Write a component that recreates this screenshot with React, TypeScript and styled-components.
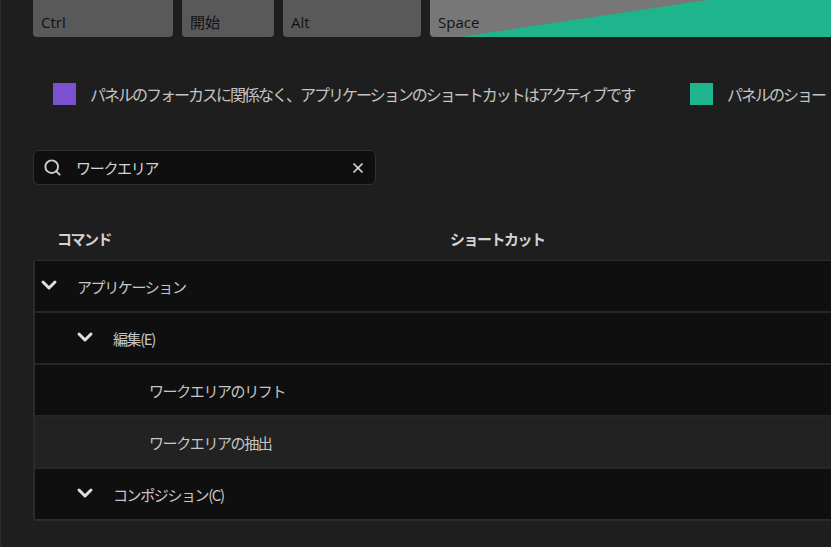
import styled, { createGlobalStyle } from "styled-components";
import { ChevronDown, Search, X } from "lucide-react";

const GlobalStyle = createGlobalStyle`
  html, body {
    margin: 0;
    padding: 0;
    background: #1e1e1e;
    overflow: hidden;
  }
  body {
    font-family: "Noto Sans CJK JP", "Noto Sans", sans-serif;
  }
`;

type Row = {
  label: string;
  depth: number;
  group: boolean;
  active?: boolean;
};

const rows: Row[] = [
  { label: "アプリケーション", depth: 0, group: true },
  { label: "編集(E)", depth: 1, group: true },
  { label: "ワークエリアのリフト", depth: 2, group: false },
  { label: "ワークエリアの抽出", depth: 2, group: false, active: true },
  { label: "コンポジション(C)", depth: 1, group: true },
];

function App() {
  return (
    <Page>
      <GlobalStyle />
      <Keyboard>
        <Key width={140}>Ctrl</Key>
        <Key width={92}>開始</Key>
        <Key width={138}>Alt</Key>
        <SpaceKey>
          <span>Space</span>
        </SpaceKey>
      </Keyboard>

      <Legend>
        <LegendItem>
          <Swatch color="#7a52d1" />
          <LegendText>
            パネルのフォーカスに関係なく、アプリケーションのショートカットはアクティブです
          </LegendText>
        </LegendItem>
        <LegendItem>
          <Swatch color="#1fb58f" />
          <LegendText>パネルのショー</LegendText>
        </LegendItem>
      </Legend>

      <SearchBox>
        <Search size={19} strokeWidth={2.4} color="#cfcfcf" />
        <SearchText>ワークエリア</SearchText>
        <X size={16} strokeWidth={2.6} color="#dcdcdc" />
      </SearchBox>

      <Header>
        <HeaderCell width={393}>コマンド</HeaderCell>
        <HeaderCell width={200}>ショートカット</HeaderCell>
      </Header>

      <Table>
        {rows.map((r) => (
          <TableRow key={r.label} active={r.active}>
            <Indent depth={r.depth}>
              <Toggle>
                {r.group && (
                  <ChevronDown size={24} strokeWidth={3} color="#e0e0e0" />
                )}
              </Toggle>
              <RowText>{r.label}</RowText>
            </Indent>
          </TableRow>
        ))}
      </Table>
    </Page>
  );
}

const Page = styled.div`
  width: 831px;
  height: 547px;
  box-sizing: border-box;
  padding-left: 32px;
  border-left: 1px solid #2c2c2c;
  display: flex;
  flex-direction: column;
  color: #c8c8c8;
  overflow: hidden;
`;

const Keyboard = styled.div`
  display: flex;
  gap: 9px;
  height: 37px;
  margin-right: -20px;
`;

const Key = styled.div<{ width: number }>`
  width: ${(p) => p.width}px;
  height: 37px;
  box-sizing: border-box;
  background: #595959;
  border-radius: 0 0 4px 4px;
  padding: 10px 8px 0;
  font-family: "Open Sans", "Noto Sans CJK JP", sans-serif;
  font-size: 15px;
  color: #111111;
  line-height: 24px;
`;

const SpaceKey = styled(Key).attrs({ width: 420 })`
  position: relative;
  flex: 1;
  background: #777777;
  border-radius: 0 0 0 4px;

  &::after {
    content: "";
    position: absolute;
    inset: 0;
    background: #1fb58c;
    clip-path: polygon(30px 100%, 278px 0, 100% 0, 100% 100%);
  }

  span {
    position: relative;
    z-index: 1;
  }
`;

const Legend = styled.div`
  display: flex;
  gap: 56px;
  margin-top: 46px;
  padding-left: 20px;
  white-space: nowrap;
  height: 22px;
  align-items: center;
`;

const LegendItem = styled.div`
  display: flex;
  align-items: center;
  gap: 14px;
`;

const Swatch = styled.span<{ color: string }>`
  width: 23px;
  height: 22px;
  background: ${(p) => p.color};
  flex-shrink: 0;
`;

const LegendText = styled.span`
  font-size: 16px;
  letter-spacing: -2px;
  color: #c4c4c4;
`;

const SearchBox = styled.div`
  margin-top: 45px;
  width: 343px;
  height: 35px;
  box-sizing: border-box;
  background: #0f0f0f;
  border: 1px solid #313131;
  border-radius: 6px;
  display: flex;
  align-items: center;
  padding: 0 9px 0 9px;
`;

const SearchText = styled.span`
  flex: 1;
  margin-left: 14px;
  font-size: 15px;
  letter-spacing: -1.3px;
  color: #d6d6d6;
`;

const Header = styled.div`
  display: flex;
  margin-top: 40px;
  padding-left: 24px;
  height: 26px;
  align-items: center;
  margin-bottom: 9px;
`;

const HeaderCell = styled.div<{ width: number }>`
  width: ${(p) => p.width}px;
  font-size: 15px;
  font-weight: 700;
  letter-spacing: -1.5px;
  color: #d2d2d2;
`;

const Table = styled.div`
  display: flex;
  flex-direction: column;
  border-left: 2px solid #2b2b2b;
  border-top: 1px solid #2b2b2b;
  border-bottom: 2px solid #2b2b2b;
  border-radius: 3px 0 0 3px;
  margin-right: -10px;
`;

const TableRow = styled.div<{ active?: boolean }>`
  height: 50px;
  background: ${(p) => (p.active ? "#222222" : "#0f0f0f")};
  & + & {
    border-top: 2px solid #262626;
  }
  display: flex;
  align-items: center;
`;

const Indent = styled.div<{ depth: number }>`
  display: flex;
  align-items: center;
  padding-left: ${(p) => 2 + p.depth * 36}px;
`;

const Toggle = styled.span`
  width: 24px;
  height: 24px;
  display: flex;
  align-items: center;
  justify-content: center;
  margin-right: 16px;
  margin-top: -3px;
`;

const RowText = styled.span`
  font-size: 15px;
  letter-spacing: -1.4px;
  color: #c6c6c6;
`;

export default App;
